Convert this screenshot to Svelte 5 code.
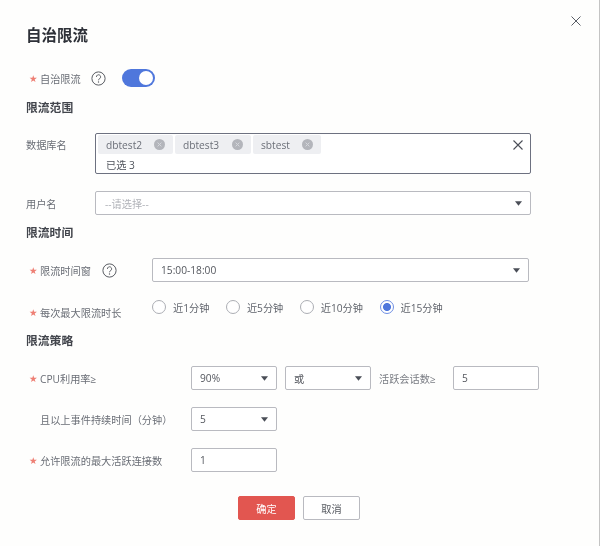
<script>
  const tags = [
    { name: 'dbtest2', w: 75 },
    { name: 'dbtest3', w: 76 },
    { name: 'sbtest', w: 68 }
  ];
  const radios = [
    { label: '近1分钟', on: false },
    { label: '近5分钟', on: false },
    { label: '近10分钟', on: false },
    { label: '近15分钟', on: true }
  ];
</script>

{#snippet caret()}
  <svg class="caret" width="7" height="5" viewBox="0 0 7 5"><path d="M0 0.3H7L3.5 4.7Z" fill="#4a4e57" /></svg>
{/snippet}

{#snippet help()}
  <svg class="help" width="15" height="15" viewBox="0 0 15 15">
    <circle cx="7.5" cy="7.5" r="6.6" fill="none" stroke="#5a5d63" stroke-width="1" />
    <path d="M5.4 5.9a2.1 2.1 0 1 1 3.3 1.7c-.8.5-1.2.9-1.2 1.7" fill="none" stroke="#5a5d63" stroke-width="1" />
    <circle cx="7.5" cy="11" r=".7" fill="#5a5d63" />
  </svg>
{/snippet}

{#snippet req(text)}
  <span class="req"><span class="star">★</span><span>{text}</span></span>
{/snippet}

<div class="dialog">
  <button class="close" aria-label="关闭">
    <svg width="10" height="10" viewBox="0 0 10 10"><path d="M.5.5l9 9M9.5.5l-9 9" stroke="#5a5e66" stroke-width="1" fill="none" /></svg>
  </button>

  <h1>自治限流</h1>

  <div class="row first">
    {@render req('自治限流')}
    <span class="help-wrap">{@render help()}</span>
    <span class="toggle"><span class="knob"></span></span>
  </div>

  <h2 class="h-scope">限流范围</h2>

  <div class="row multi-row">
    <span class="label w69 top">数据库名</span>
    <div class="multi">
      <div class="tags">
        {#each tags as t}
          <span class="tag" style="width:{t.w}px">
            <span>{t.name}</span>
            <svg width="11" height="11" viewBox="0 0 11 11">
              <circle cx="5.5" cy="5.5" r="5.5" fill="#b3b5bb" />
              <path d="M3.6 3.6l3.8 3.8M7.4 3.6l-3.8 3.8" stroke="#d5d7dc" stroke-width="1" />
            </svg>
          </span>
        {/each}
      </div>
      <div class="count">已选 3</div>
      <svg class="clear" width="10" height="10" viewBox="0 0 10 10"><path d="M.5.5l9 9M9.5.5l-9 9" stroke="#4a4e57" stroke-width="1.1" fill="none" /></svg>
    </div>
  </div>

  <div class="row user-row">
    <span class="label w69">用户名</span>
    <div class="select user"><span class="placeholder">--请选择--</span>{@render caret()}</div>
  </div>

  <h2 class="h-time">限流时间</h2>

  <div class="row time-row">
    <span class="label-box w126">
      {@render req('限流时间窗')}
      <span class="help-wrap inner">{@render help()}</span>
    </span>
    <div class="select window"><span>15:00-18:00</span>{@render caret()}</div>
  </div>

  <div class="row radio-row">
    <span class="label-box w126 low">{@render req('每次最大限流时长')}</span>
    <div class="radios">
      {#each radios as r}
        <span class="radio-item">
          <span class="radio" class:on={r.on}></span>
          <span>{r.label}</span>
        </span>
      {/each}
    </div>
  </div>

  <h2 class="h-policy">限流策略</h2>

  <div class="row cpu-row">
    <span class="label-box w165">{@render req('CPU利用率≥')}</span>
    <div class="select small"><span>90%</span>{@render caret()}</div>
    <div class="select small second"><span>或</span>{@render caret()}</div>
    <span class="session">活跃会话数≥</span>
    <div class="input small"><span>5</span></div>
  </div>

  <div class="row next-row">
    <span class="label-box w165 indent">且以上事件持续时间（分钟）</span>
    <div class="select small"><span>5</span>{@render caret()}</div>
  </div>

  <div class="row next-row">
    <span class="label-box w165">{@render req('允许限流的最大活跃连接数')}</span>
    <div class="input small"><span>1</span></div>
  </div>

  <div class="actions">
    <button class="btn primary">确定</button>
    <button class="btn">取消</button>
  </div>
</div>

<style>
  :global(body) {
    margin: 0;
    background: #fefefd;
  }
  .dialog {
    position: relative;
    box-sizing: border-box;
    width: 600px;
    height: 546px;
    padding: 24px 0 0 26px;
    background: #fefefd;
    border-right: 1px solid #c4c4c4;
    font-family: "Open Sans", "Noto Sans CJK SC", sans-serif;
    font-size: 10.2px;
    color: #6a6e76;
    filter: blur(0.3px);
  }
  .close {
    position: absolute;
    top: 16px;
    right: 18px;
    padding: 0;
    border: 0;
    background: none;
    line-height: 0;
  }
  h1 {
    margin: 0;
    font-size: 15.5px;
    line-height: 22px;
    font-weight: 700;
    color: #2e3138;
  }
  h2 {
    margin: 0;
    font-size: 11.8px;
    line-height: 16px;
    font-weight: 700;
    color: #42454c;
  }
  .h-scope { margin-top: 12px; }
  .h-time { margin-top: 9px; }
  .h-policy { margin-top: 18px; }
  .row {
    display: flex;
    align-items: center;
  }
  .first { margin-top: 23px; height: 18px; }
  .multi-row { margin-top: 18px; align-items: flex-start; }
  .user-row { margin-top: 17px; }
  .time-row { margin-top: 18px; }
  .radio-row { margin-top: 18px; height: 14px; }
  .cpu-row { margin-top: 18px; }
  .next-row { margin-top: 17px; }
  .label { flex: none; }
  .top { line-height: 24px; }
  .w69 { width: 69px; }
  .label-box {
    display: flex;
    align-items: center;
    flex: none;
  }
  .w126 { width: 126px; }
  .w165 { width: 165px; }
  .low { transform: translateY(5px); }
  .indent { padding-left: 14px; box-sizing: border-box; white-space: nowrap; }
  .req {
    display: inline-flex;
    align-items: center;
    white-space: nowrap;
  }
  .star {
    width: 11px;
    margin-left: 3px;
    font-family: "DejaVu Sans", sans-serif;
    font-size: 9.5px;
    color: #ee7f74;
  }
  .help-wrap {
    display: inline-flex;
    margin-left: 10px;
  }
  .help-wrap.inner { margin-left: 11px; }
  .help { display: block; }
  .toggle {
    position: relative;
    width: 33px;
    height: 18px;
    margin-left: 16.5px;
    border-radius: 9px;
    background: #4f77dc;
  }
  .knob {
    position: absolute;
    top: 2px;
    right: 2px;
    width: 14px;
    height: 14px;
    border-radius: 50%;
    background: #fff;
  }
  .multi {
    position: relative;
    box-sizing: border-box;
    width: 436px;
    height: 41px;
    padding: 1px 2px;
    border: 1px solid #6d7180;
    border-radius: 2px;
    background: #fff;
  }
  .tags {
    display: flex;
    gap: 2px;
    height: 19px;
  }
  .tag {
    display: flex;
    align-items: center;
    justify-content: space-between;
    box-sizing: border-box;
    padding: 0 8px 0 8px;
    border-radius: 2px;
    background: #eeeff2;
    color: #6b6f78;
  }
  .count {
    margin-top: 2px;
    padding-left: 8px;
    line-height: 18px;
    color: #50545c;
  }
  .clear {
    position: absolute;
    top: 6px;
    right: 7px;
  }
  .select, .input {
    display: flex;
    align-items: center;
    justify-content: space-between;
    box-sizing: border-box;
    height: 24px;
    padding: 0 8px;
    border: 1px solid #b9bac0;
    border-radius: 2px;
    background: #fff;
    color: #55585f;
    flex: none;
  }
  .user { width: 436px; padding-left: 9px; }
  .window { width: 377px; }
  .small { width: 86px; }
  .second { margin-left: 8px; }
  .placeholder { color: #b0b2b8; }
  .caret { display: block; }
  .session {
    width: 74px;
    margin-left: 8px;
    white-space: nowrap;
    color: #7a7d84;
  }
  .radios {
    display: flex;
    flex: none;
    width: 320px;
    color: #5f636b;
  }
  .radio-item {
    display: inline-flex;
    align-items: center;
    gap: 7px;
    margin-right: 16.5px;
    white-space: nowrap;
  }
  .radio {
    box-sizing: border-box;
    width: 14px;
    height: 14px;
    border: 1px solid #acaeb4;
    border-radius: 50%;
    background: #fff;
  }
  .radio.on {
    border-color: #6f8fe3;
    background: radial-gradient(circle, #4f77dc 0 3.6px, #fff 4.4px);
  }
  .actions {
    display: flex;
    gap: 8px;
    margin-top: 24px;
    padding-left: 212px;
  }
  .btn {
    box-sizing: border-box;
    width: 57px;
    height: 24px;
    padding: 0;
    border: 1px solid #b9bac0;
    border-radius: 2px;
    background: #fff;
    font: inherit;
    color: #55585f;
  }
  .primary {
    border-color: #e25650;
    background: #e25650;
    color: #fff;
  }
</style>
